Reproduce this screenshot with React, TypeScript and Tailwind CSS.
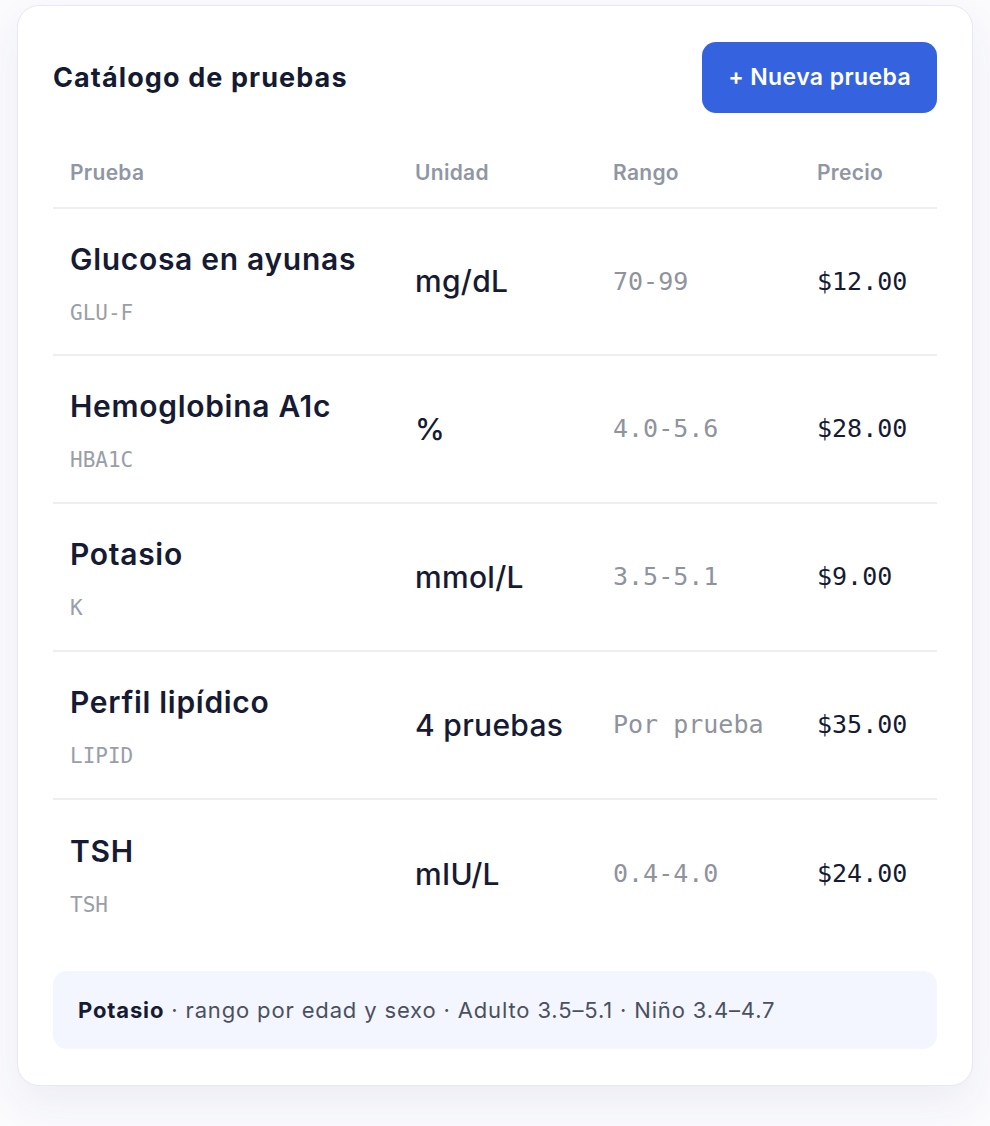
import React from 'react';

const tests = [
  { name: 'Glucosa en ayunas', code: 'GLU-F', unit: 'mg/dL', range: '70-99', price: '$12.00' },
  { name: 'Hemoglobina A1c', code: 'HBA1C', unit: '%', range: '4.0-5.6', price: '$28.00' },
  { name: 'Potasio', code: 'K', unit: 'mmol/L', range: '3.5-5.1', price: '$9.00' },
  { name: 'Perfil lipídico', code: 'LIPID', unit: '4 pruebas', range: 'Por prueba', price: '$35.00' },
  { name: 'TSH', code: 'TSH', unit: 'mIU/L', range: '0.4-4.0', price: '$24.00' },
];

const sans = "font-['Inter','Noto_Sans',sans-serif]";
const mono = "font-['DejaVu_Sans_Mono','Liberation_Mono',monospace]";

export default function App() {
  return (
    <div className={`min-h-screen bg-[#fbfbfe] pt-[5px] pb-10 ${sans}`}>
      <div className="mx-[17px] rounded-[22px] border border-[#e6e8f2] bg-white px-[35px] pt-[36px] pb-[36px] shadow-[0_18px_40px_rgba(40,50,110,0.07)]">
        <div className="flex items-center justify-between">
          <h1 className="text-[27px] font-bold leading-none tracking-[1.1px] text-[#151a33]">Catálogo de pruebas</h1>
          <button className="h-[71px] rounded-[14px] bg-[#3563e0] px-[26px] text-[23px] font-semibold tracking-[0.4px] text-white">
            + Nueva prueba
          </button>
        </div>

        <div className="mt-[25px] grid h-[71px] grid-cols-[345px_198px_204px_137px] items-center border-b-2 border-[#eceef2] text-[21px] font-semibold tracking-[0.3px] text-[#9096a3]">
          <div className="pl-[17px]">Prueba</div>
          <div className="pl-[17px]">Unidad</div>
          <div className="pl-[17px]">Rango</div>
          <div className="pl-[17px]">Precio</div>
        </div>

        {tests.map((t, i) => (
          <div
            key={t.code}
            className={`grid grid-cols-[345px_198px_204px_137px] items-center ${
              i === 0 ? 'h-[147px]' : 'h-[148px]'
            } ${i < tests.length - 1 ? 'border-b-2 border-[#eceef2]' : ''}`}
          >
            <div className="pl-[17px]">
              <div className="text-[30px] font-semibold leading-[40px] tracking-[0.7px] text-[#161b33]">{t.name}</div>
              <div className={`mt-[22px] text-[21px] leading-[24px] text-[#9a9ea8] ${mono}`}>{t.code}</div>
            </div>
            <div className="pl-[17px] text-[30px] font-medium tracking-[0.3px] text-[#161b33]">{t.unit}</div>
            <div className={`pl-[17px] text-[25px] text-[#8f939d] ${mono}`}>{t.range}</div>
            <div className={`pl-[17px] text-[25px] text-[#161b33] ${mono}`}>{t.price}</div>
          </div>
        ))}

        <div className="mt-[23px] flex h-[78px] items-center rounded-[14px] bg-[#f3f6fe] px-[25px] text-[22px] tracking-[0.85px] text-[#4b5060]">
          <span className="font-bold text-[#161b33]">Potasio</span>
          <span>&nbsp;· rango por edad y sexo · Adulto 3.5–5.1 · Niño 3.4–4.7</span>
        </div>
      </div>
    </div>
  );
}
